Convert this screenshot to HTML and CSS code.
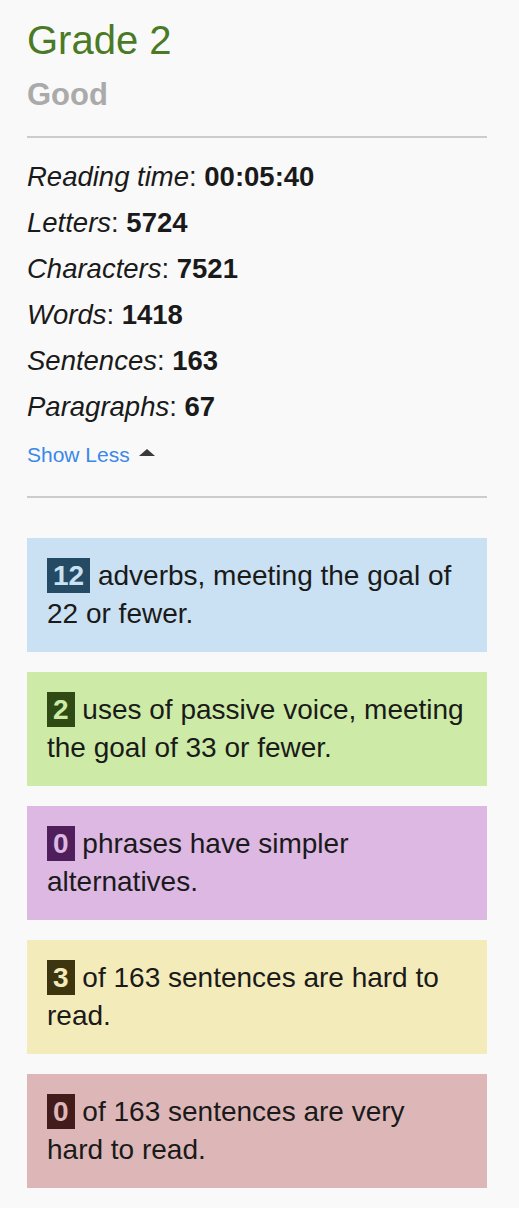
FILE: index.html
```html
<!DOCTYPE html>
<html lang="en">
<head>
<meta charset="utf-8">
<title>Readability</title>
<link rel="stylesheet" href="styles.css">
</head>
<body>
<div class="panel">
  <h1 class="grade">Grade 2</h1>
  <h2 class="verdict">Good</h2>
  <hr class="rule rule-top">
  <ul class="stats">
    <li><em>Reading time</em>: <strong>00:05:40</strong></li>
    <li><em>Letters</em>: <strong>5724</strong></li>
    <li><em>Characters</em>: <strong>7521</strong></li>
    <li><em>Words</em>: <strong>1418</strong></li>
    <li><em>Sentences</em>: <strong>163</strong></li>
    <li><em>Paragraphs</em>: <strong>67</strong></li>
  </ul>
  <a class="toggle" href="#">Show Less <span class="caret"></span></a>
  <hr class="rule rule-bottom">
  <div class="cards">
    <div class="card card-adverb"><span class="badge">12</span> adverbs, meeting the goal of 22 or fewer.</div>
    <div class="card card-passive"><span class="badge">2</span> uses of passive voice, meeting the goal of 33 or fewer.</div>
    <div class="card card-simpler"><span class="badge">0</span> phrases have simpler alternatives.</div>
    <div class="card card-hard"><span class="badge">3</span> of 163 sentences are hard to read.</div>
    <div class="card card-veryhard"><span class="badge">0</span> of 163 sentences are very hard to read.</div>
  </div>
</div>
</body>
</html>
```
FILE: styles.css
```css
html, body {
  margin: 0;
  padding: 0;
  background: #f9f9f9;
}
body {
  font-family: "Liberation Sans", Arial, Helvetica, sans-serif;
  color: #1a1a1a;
}
.panel {
  width: 460px;
  margin: 0 0 0 27px;
  padding-top: 17px;
  padding-bottom: 20px;
}
.grade {
  margin: 0;
  font-size: 40px;
  line-height: 46px;
  font-weight: normal;
  color: #4b7a26;
}
.verdict {
  margin: 14px 0 0 0;
  font-size: 31px;
  line-height: 36px;
  font-weight: bold;
  color: #aaaaaa;
}
.rule {
  border: 0;
  height: 2px;
  background: #cccccc;
  margin: 0;
}
.rule-top {
  margin-top: 23px;
}
.stats {
  list-style: none;
  margin: 16px 0 0 0;
  padding: 0;
  font-size: 27.5px;
  line-height: 46px;
}
.stats em {
  font-style: italic;
}
.stats strong {
  font-weight: bold;
}
.toggle {
  display: inline-flex;
  align-items: center;
  gap: 9px;
  margin-top: 12px;
  font-size: 21px;
  line-height: 26px;
  color: #3a88e9;
  text-decoration: none;
}
.caret {
  display: inline-block;
  width: 0;
  height: 0;
  border-left: 8px solid transparent;
  border-right: 8px solid transparent;
  border-bottom: 7px solid #3a3a3a;
  margin-top: -5px;
}
.rule-bottom {
  margin-top: 28px;
}
.cards {
  display: flex;
  flex-direction: column;
  gap: 20px;
  margin-top: 40px;
}
.card {
  padding: 19px 21px 19px 20px;
  font-size: 28px;
  line-height: 38px;
  color: #1a1a1a;
}
.badge {
  font-weight: bold;
  padding: 2px 6px;
}
.card-adverb { background: #c9e1f2; }
.card-adverb .badge { background: #244a64; color: #c9e1f2; }
.card-passive { background: #cdeba6; }
.card-passive .badge { background: #2f4a15; color: #cdeba6; }
.card-simpler { background: #dcb8e3; }
.card-simpler .badge { background: #4e1f5a; color: #dcb8e3; }
.card-hard { background: #f4ebbb; }
.card-hard .badge { background: #3d3410; color: #f4ebbb; }
.card-veryhard { background: #ddb7b7; }
.card-veryhard .badge { background: #421b1b; color: #ddb7b7; }
```
